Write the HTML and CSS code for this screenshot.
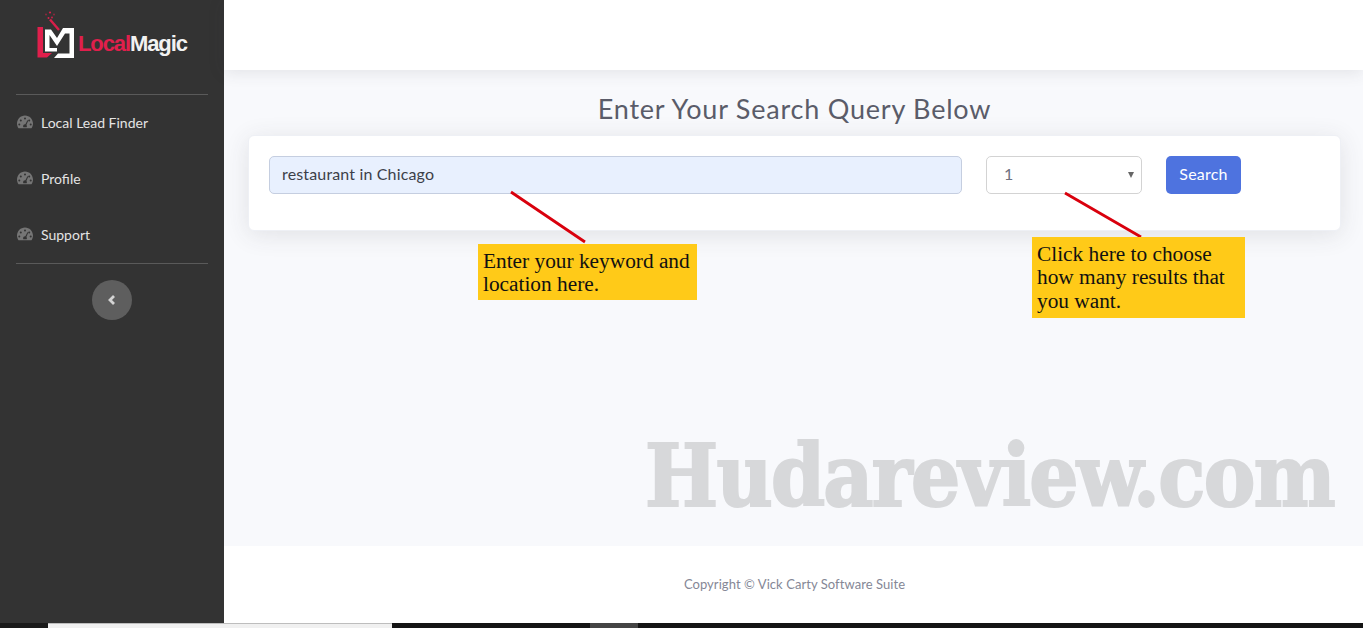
FILE: index.html
```html
<!DOCTYPE html>
<html lang="en">
<head>
<meta charset="utf-8">
<title>Local Magic</title>
<link rel="stylesheet" href="styles.css">
</head>
<body>
<div class="wrapper">
  <aside class="sidebar">
    <a class="brand" href="#">
      <svg class="brand-mark" width="40" height="50" viewBox="0 0 40 50" aria-hidden="true">
        <g fill="#d81f4a">
          <circle cx="9" cy="3.500" r="0.900" opacity=".6"/><circle cx="13" cy="1.500" r="1.100"/><circle cx="17" cy="3.500" r="0.900" opacity=".6"/><circle cx="11.500" cy="7" r="1"/><circle cx="15" cy="6.500" r="0.900"/>
        </g>
        <path d="M13 8.500 L22 19" stroke="#d81f4a" stroke-width="2.400" fill="none"/>
        <path d="M0.500 16 H6 V42 H15 L10 46.500 H0.500 Z" fill="#e01f4c"/>
        <path d="M8 18.500 H14 L20 27 L26 17 H37 V47 H17 L21 42.500 H32.500 V22.500 H28 L20 35 L12.500 24 V37 H20 V40.500 H8 Z" fill="#fff"/>
      </svg>
      <span class="brand-text"><span class="brand-red">Local</span>Magic</span>
    </a>
    <hr class="side-rule">
    <nav class="side-nav">
      <a class="side-link" href="#">
        <svg class="gauge" width="16" height="14" viewBox="0 0 16 14" aria-hidden="true"><path fill="#757575" fill-rule="evenodd" d="M8 0.500C3.600 0.500 0 4.100 0 8.500c0 1.600.5 3.100 1.300 4.400.1.200.4.300.6.300h12.200c.2 0 .5-.1.600-.3.800-1.300 1.300-2.800 1.300-4.400 0-4.400-3.600-8-8-8zM8 2.500a1 1 0 1 1 0 2 1 1 0 0 1 0-2zM3.800 4.500a1 1 0 1 1 0 2 1 1 0 0 1 0-2zM12.200 4.500a1 1 0 1 1 0 2 1 1 0 0 1 0-2zM2.300 8.500a1 1 0 1 1 0 2 1 1 0 0 1 0-2zM13.700 8.500a1 1 0 1 1 0 2 1 1 0 0 1 0-2zM10.400 5.200l.9.400-1.900 4.300c.3.400.5.800.5 1.300 0 .4-.1.700-.3 1H6.400c-.2-.3-.3-.6-.3-1 0-1 .9-1.900 1.900-1.900h.4z"/></svg>
        <span>Local Lead Finder</span>
      </a>
      <a class="side-link" href="#">
        <svg class="gauge" width="16" height="14" viewBox="0 0 16 14" aria-hidden="true"><path fill="#757575" fill-rule="evenodd" d="M8 0.500C3.600 0.500 0 4.100 0 8.500c0 1.600.5 3.100 1.300 4.400.1.200.4.300.6.300h12.200c.2 0 .5-.1.600-.3.800-1.300 1.300-2.800 1.300-4.400 0-4.400-3.600-8-8-8zM8 2.500a1 1 0 1 1 0 2 1 1 0 0 1 0-2zM3.800 4.500a1 1 0 1 1 0 2 1 1 0 0 1 0-2zM12.200 4.500a1 1 0 1 1 0 2 1 1 0 0 1 0-2zM2.300 8.500a1 1 0 1 1 0 2 1 1 0 0 1 0-2zM13.700 8.500a1 1 0 1 1 0 2 1 1 0 0 1 0-2zM10.400 5.200l.9.400-1.900 4.300c.3.400.5.800.5 1.300 0 .4-.1.700-.3 1H6.400c-.2-.3-.3-.6-.3-1 0-1 .9-1.900 1.900-1.900h.4z"/></svg>
        <span>Profile</span>
      </a>
      <a class="side-link" href="#">
        <svg class="gauge" width="16" height="14" viewBox="0 0 16 14" aria-hidden="true"><path fill="#757575" fill-rule="evenodd" d="M8 0.500C3.600 0.500 0 4.100 0 8.500c0 1.600.5 3.100 1.300 4.400.1.200.4.300.6.300h12.200c.2 0 .5-.1.600-.3.800-1.300 1.300-2.800 1.300-4.400 0-4.400-3.600-8-8-8zM8 2.500a1 1 0 1 1 0 2 1 1 0 0 1 0-2zM3.800 4.500a1 1 0 1 1 0 2 1 1 0 0 1 0-2zM12.200 4.500a1 1 0 1 1 0 2 1 1 0 0 1 0-2zM2.300 8.500a1 1 0 1 1 0 2 1 1 0 0 1 0-2zM13.700 8.500a1 1 0 1 1 0 2 1 1 0 0 1 0-2zM10.400 5.200l.9.400-1.900 4.300c.3.400.5.800.5 1.300 0 .4-.1.700-.3 1H6.400c-.2-.3-.3-.6-.3-1 0-1 .9-1.900 1.900-1.900h.4z"/></svg>
        <span>Support</span>
      </a>
    </nav>
    <hr class="side-rule">
    <button class="side-toggle" type="button" aria-label="Collapse sidebar">
      <svg width="10" height="12" viewBox="0 0 10 12" aria-hidden="true"><path d="M7 2 L3 6 L7 10" fill="none" stroke="#d4d4d4" stroke-width="2.800"/></svg>
    </button>
  </aside>

  <div class="content">
    <header class="topbar"></header>
    <main class="main">
      <h1 class="page-title">Enter Your Search Query Below</h1>
      <section class="card">
        <form class="search-form">
          <input class="field field-query" type="text" value="restaurant in Chicago">
          <div class="select-wrap">
            <select class="field field-count"><option>1</option></select>
          </div>
          <button class="btn-search" type="button">Search</button>
        </form>
      </section>
    </main>
    <footer class="footer">Copyright © Vick Carty Software Suite</footer>
  </div>
</div>

<div class="taskbar">
  <span class="task task-dark-a"></span>
  <span class="task task-light"></span>
  <span class="task task-dark-b"></span>
  <span class="task task-grey"></span>
  <span class="task task-dark-c"></span>
</div>

<svg class="pointer" width="1363" height="628" viewBox="0 0 1363 628" aria-hidden="true">
  <path d="M511 192 L585 242 M1065 193 L1141 237" stroke="#d9000d" stroke-width="2.800" fill="none"/>
</svg>
<p class="note note-keyword">Enter your keyword and<br>location here.</p>
<p class="note note-results">Click here to choose<br>how many results that<br>you want.</p>
<div class="watermark">Hudareview.com</div>
</body>
</html>
```
FILE: styles.css
```css
* { box-sizing: border-box; }
html, body { margin: 0; height: 100%; }
body {
  font-family: "Lato", "Noto Sans", sans-serif;
  color: #5a5c69;
  overflow: hidden;
  position: relative;
  background: #1a1a1a;
}

.wrapper { display: flex; height: 623px; }

/* sidebar */
.sidebar {
  width: 224px;
  flex: none;
  background: #333333;
  padding: 0 16px;
  display: flex;
  flex-direction: column;
}
.brand {
  height: 94px;
  display: flex;
  align-items: flex-start;
  padding: 11px 0 0 21px;
  text-decoration: none;
  gap: 1px;
}
.brand-mark { flex: none; }
.brand-text {
  font: bold 22px/1 "Liberation Sans", sans-serif;
  letter-spacing: -1.1px;
  color: #f2f2f2;
  margin-top: 22px;
}
.brand-red { color: #e01f4c; }
.side-rule { width: 100%; height: 1px; margin: 0; border: 0; background: #5a5a5a; flex: none; }
.side-nav { display: flex; flex-direction: column; }
.side-link {
  height: 56px;
  display: flex;
  align-items: center;
  gap: 8px;
  padding: 0 0 2px 1px;
  font-size: 14px;
  color: #e4e4e4;
  text-decoration: none;
}
.gauge { flex: none; }
.side-toggle {
  width: 40px;
  height: 40px;
  margin: 16px auto 0;
  padding: 0;
  border: 0;
  border-radius: 50%;
  background: #5e5e5e;
  display: flex;
  align-items: center;
  justify-content: center;
}

/* content */
.content { flex: 1; min-width: 0; display: flex; flex-direction: column; background: #f8f9fc; }
.topbar {
  height: 70px;
  flex: none;
  background: #fff;
  box-shadow: 0 2px 16px rgba(58, 59, 69, .12);
  position: relative;
}
.main { flex: 1; padding: 21px 22px 0 24px; }
.page-title {
  margin: 0 0 9px;
  font-size: 27px;
  line-height: 35px;
  font-weight: 400;
  letter-spacing: .78px;
  text-align: center;
  color: #5a5c69;
}
.card {
  height: 96px;
  background: #fff;
  border: 1px solid #eef0f5;
  border-radius: 6px;
  padding: 20px;
  box-shadow: 0 4px 24px rgba(58, 59, 69, .12);
}
.search-form { display: flex; gap: 24px; }
.field {
  height: 38px;
  border: 1px solid #d1d3e2;
  border-radius: 5px;
  font-family: inherit;
  font-size: 16px;
  color: #6e707e;
  background: #fff;
}
.field-query {
  width: 693px;
  flex: none;
  padding: 0 12px 4px;
  letter-spacing: .15px;
  background: #e8f0fe;
  border-color: #c5cee0;
  color: #3c3f49;
}
.select-wrap { position: relative; width: 156px; flex: none; }
.select-wrap::after {
  content: "";
  position: absolute;
  right: 8px;
  top: 16px;
  border-left: 3.500px solid transparent;
  border-right: 3.500px solid transparent;
  border-top: 6px solid #666;
  pointer-events: none;
}
.field-count {
  display: block;
  width: 100%;
  padding: 0 12px 4px 17px;
  appearance: none;
  border-color: #d3d3d3;
}
.btn-search {
  width: 75px;
  height: 38px;
  flex: none;
  border: 0;
  border-radius: 5px;
  background: #4e73df;
  color: #fff;
  font-family: inherit;
  font-size: 16px;
  letter-spacing: .2px;
  padding: 0 0 4px;
}

/* footer */
.footer {
  height: 77px;
  flex: none;
  background: #fff;
  display: flex;
  align-items: center;
  justify-content: center;
  padding: 0 0 2px 2px;
  font-size: 13px;
  letter-spacing: .06px;
  color: #858796;
}

/* strip along the bottom edge */
.taskbar { display: flex; height: 5px; }
.task { display: block; height: 5px; }
.task-dark-a { width: 48px; background: #1a1a1a; }
.task-light { width: 344px; background: #f0f0f0; border-top: 1px solid #bdbdbd; }
.task-dark-b { width: 198px; background: #141414; }
.task-grey { width: 48px; background: #444; }
.task-dark-c { flex: 1; background: #141414; }

/* annotations over the screenshot */
.pointer { position: absolute; left: 0; top: 0; pointer-events: none; }
.note {
  position: absolute;
  margin: 0;
  background: #ffca18;
  color: #111;
  font: 21.330px/23.500px "Liberation Serif", serif;
  padding: 5.500px 5px 5px;
}
.note-keyword { left: 478px; top: 244px; width: 219px; height: 56px; }
.note-results { left: 1032px; top: 237px; width: 213px; height: 81px; }
.watermark {
  position: absolute;
  left: 645px;
  top: 426px;
  font: bold 86px/100px "DejaVu Serif", serif;
  font-stretch: condensed;
  letter-spacing: -1.700px;
  color: #d7d8da;
  -webkit-text-stroke: 2px #d7d8da;
  white-space: nowrap;
}
```
